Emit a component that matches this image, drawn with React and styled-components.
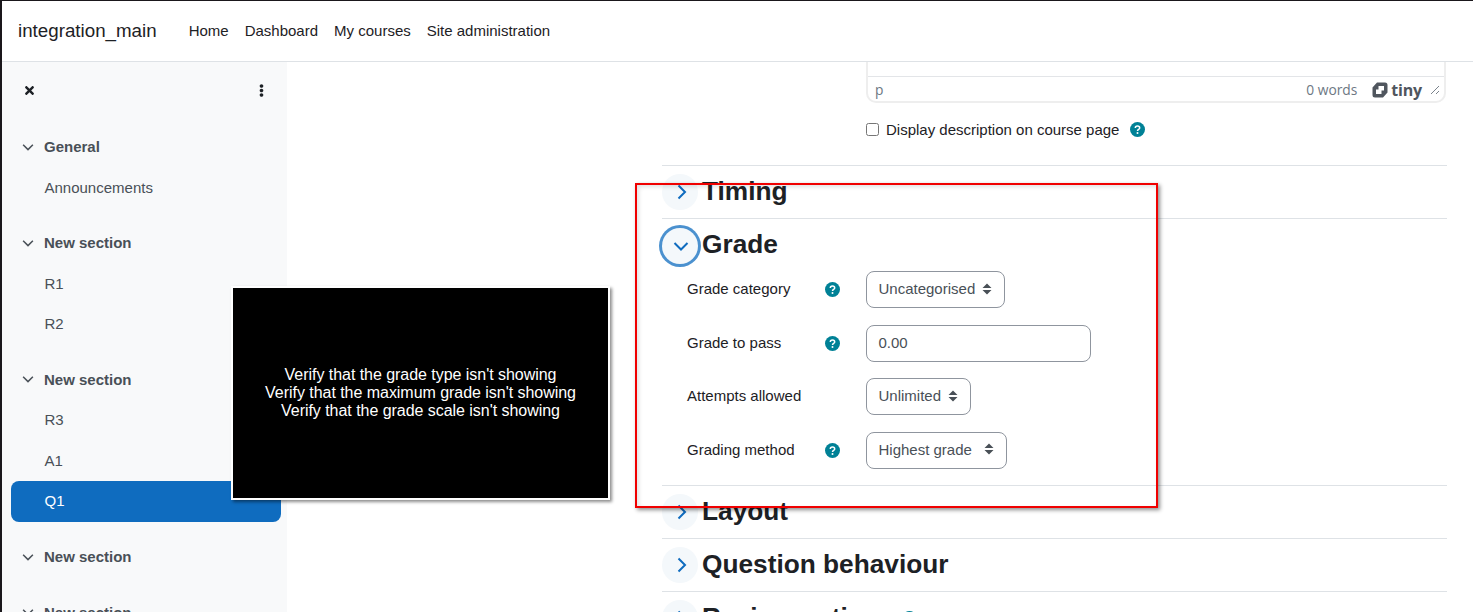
import React from "react";
import styled, { createGlobalStyle } from "styled-components";
import { FaTimes, FaEllipsisV } from "react-icons/fa";

const GlobalStyle = createGlobalStyle`
  html, body {
    margin: 0;
    padding: 0;
    background: #fff;
    overflow: hidden;
    font-family: "Liberation Sans", Arial, sans-serif;
    color: #1d2125;
  }
`;

// Page shell
const Page = styled.div`
  position: relative;
  box-sizing: border-box;
  height: 612px;
  width: 1473px;
  overflow: hidden;
  border-top: 1px solid #1a171b;
  border-left: 2px solid #1a171b;
  display: flex;
  flex-direction: column;
`;

const Navbar = styled.header`
  flex: none;
  height: 58px;
  box-sizing: content-box;
  padding: 0 0 2px 16px;
  border-bottom: 1px solid #dee2e6;
  display: flex;
  align-items: center;
`;

const Brand = styled.div`
  font-size: 18.75px;
  margin-right: 24px;
  padding-top: 2px;
`;

const NavLink = styled.a`
  font-size: 15px;
  padding: 0 8px;
`;

const Body = styled.div`
  flex: 1;
  display: flex;
  min-height: 0;
`;

// Course index drawer
const Drawer = styled.aside`
  flex: none;
  width: 285px;
  background: #f8f9fa;
  padding: 0 6px 0 9px;
  box-sizing: border-box;
  color: #495057;
`;

const DrawerTools = styled.div`
  height: 56px;
  margin-bottom: 8px;
  display: flex;
  align-items: center;
  justify-content: space-between;
  padding: 0 13px 0 12px;
  color: #1d2125;
  font-size: 13px;
`;

const Group = styled.section`
  margin-bottom: 14.5px;
`;

const GroupHead = styled.div`
  height: 41px;
  display: flex;
  align-items: center;
  gap: 10px;
  padding-left: 11px;
  font-size: 15px;
  font-weight: 700;
`;

const Item = styled.div`
  box-sizing: border-box;
  height: ${({ $active }) => ($active ? "41px" : "40.5px")};
  padding-bottom: ${({ $active }) => ($active ? "1px" : "0")};
  display: flex;
  align-items: center;
  padding-left: 33.5px;
  font-size: 15px;
  border-radius: 8px;
  background: ${({ $active }) => ($active ? "#0f6cbf" : "transparent")};
  color: ${({ $active }) => ($active ? "#fff" : "#495057")};
`;

// Main column
const Main = styled.main`
  flex: 1;
  padding-left: 375px;
  min-width: 0;
`;

const Column = styled.div`
  width: 785px;
`;

const DescriptionBlock = styled.div`
  padding-left: 204px;
  height: 103px;
`;

const EditorBox = styled.div`
  box-sizing: border-box;
  height: 41px;
  width: 580px;
  padding-top: 14px;
  border: 2px solid #eeeeee;
  border-top: 0;
  border-radius: 0 0 10px 10px;
`;

const StatusBar = styled.div`
  height: 25px;
  border-top: 1px solid #e3e5e8;
  display: flex;
  align-items: center;
  padding: 0 4px 0 7px;
  font-family: "Open Sans", sans-serif;
  font-size: 13.8px;
  color: #6d7883;
`;

const WordCount = styled.span`
  margin-left: auto;
  margin-right: 15px;
`;

const TinyLogo = styled.span`
  display: flex;
  align-items: center;
  gap: 3px;
  font-size: 16px;
  font-weight: 700;
  color: #50565e;
  margin-right: 8px;
  letter-spacing: -0.2px;
`;

const CheckRow = styled.label`
  display: flex;
  align-items: center;
  height: 20px;
  margin-top: 16px;
  font-size: 15px;
`;

const Check = styled.input`
  margin: 0 7px 0 0;
  width: 13px;
  height: 13px;
`;

const HelpBadge = styled.svg`
  width: 15px;
  height: 15px;
  flex: none;
  display: block;
  margin-left: ${({ $gap }) => $gap || 0}px;
`;

const Section = styled.section`
  border-top: 1px solid #dee2e6;
`;

const SectionHead = styled.div`
  height: 52px;
  display: flex;
  align-items: center;
  gap: 4px;
`;

const Toggle = styled.span`
  flex: none;
  box-sizing: border-box;
  width: 36px;
  height: 36px;
  padding-left: ${({ $focused }) => ($focused ? 2 : 3)}px;
  border-radius: 50%;
  background: #f4f8fb;
  display: flex;
  align-items: center;
  justify-content: center;
  color: #0f6cbf;
  ${({ $focused }) =>
    $focused &&
    `
    margin-top: 1px;
    box-shadow: 0 0 0 3px rgba(15, 108, 191, 0.75);
  `}
`;

const Title = styled.h3`
  margin: 0;
  font-size: 26.25px;
  font-weight: 700;
  color: #1d2125;
  line-height: 1.2;
`;

const Form = styled.div`
  padding: 0 0 16.5px 25px;
  display: grid;
  row-gap: 16.5px;
`;

const FormRow = styled.div`
  display: grid;
  grid-template-columns: 138px 41px auto;
  align-items: center;
  height: 37px;
  font-size: 15px;
`;

const FieldLabel = styled.span`
  padding-bottom: 2px;
`;

const Select = styled.div`
  box-sizing: border-box;
  height: 37px;
  width: ${({ $width }) => $width}px;
  border: 1px solid #8f959e;
  border-radius: 8px;
  display: flex;
  align-items: center;
  justify-content: space-between;
  padding: 0 12px 2px 11.5px;
  color: #495057;
`;

const TextInput = styled.div`
  box-sizing: border-box;
  height: 37px;
  width: 225px;
  border: 1px solid #8f959e;
  border-radius: 8px;
  display: flex;
  align-items: center;
  padding: 0 11.5px 2px;
  color: #495057;
`;

// Annotations laid over the screenshot
const RedFrame = styled.div`
  position: absolute;
  left: 633px;
  top: 182px;
  width: 523px;
  height: 325px;
  box-sizing: border-box;
  border: 2px solid #f00000;
  box-shadow: 2px 2px 4px rgba(0, 0, 0, 0.45), inset 2px 2px 4px rgba(0, 0, 0, 0.12);
  pointer-events: none;
`;

const Callout = styled.div`
  position: absolute;
  left: 229px;
  top: 285px;
  width: 379px;
  height: 214px;
  box-sizing: border-box;
  background: #000;
  border: 2px solid #fff;
  box-shadow: 2px 2px 3px rgba(0, 0, 0, 0.45);
  color: #fff;
  font-size: 16px;
  line-height: 18px;
  letter-spacing: -0.04px;
  display: flex;
  flex-direction: column;
  align-items: center;
  justify-content: center;
`;

const Chevron = ({ down, size = 16, weight = 2 }) => (
  <svg width={size} height={size} viewBox="0 0 16 16" fill="none" stroke="currentColor" strokeWidth={weight}>
    <path d={down ? "M1.5 5 8 11.5 14.5 5" : "M4.5 1.5 11 8l-6.500 6.500"} />
  </svg>
);

const Caret = () => (
  <svg width="10" height="12" viewBox="0 0 10 12" fill="#495057">
    <path d="M5 0.500 9.500 5H0.500zM5 11.500 0.500 7h9z" />
  </svg>
);

const Help = ({ gap }) => (
  <HelpBadge viewBox="0 0 15 15" $gap={gap}>
    <circle cx="7.500" cy="7.500" r="7.500" fill="#008196" />
    <path d="M5.300 6c0-1.300 1-2 2.200-2s2.200.7 2.200 1.900c0 1.500-2.200 1.500-2.200 3" fill="none" stroke="#fff" strokeWidth="1.500" />
    <circle cx="7.500" cy="11" r="1" fill="#fff" />
  </HelpBadge>
);

const TinyMark = () => (
  <svg width="16" height="16" viewBox="0 0 16 16">
    <path
      fill="#50565e"
      fillRule="evenodd"
      d="M5 .5h8A2.500 2.500 0 0 1 15.500 3v7.500L11 15.500H3A2.500 2.500 0 0 1 .5 13V5.500zM6.500 4v3.500H4V12h5.500V8.500H12V4z"
    />
  </svg>
);

const ResizeGrip = () => (
  <svg width="10" height="10" viewBox="0 0 10 10" stroke="#7a828b" strokeWidth="1">
    <path d="M1 9 9 1M6 9l3-3" />
  </svg>
);

const courseIndex = [
  { title: "General", items: ["Announcements"] },
  { title: "New section", items: ["R1", "R2"] },
  { title: "New section", items: ["R3", "A1", "Q1"] },
  { title: "New section", items: [] },
  { title: "New section", items: [] },
];

const gradeFields = [
  { label: "Grade category", help: true, value: "Uncategorised", width: 139 },
  { label: "Grade to pass", help: true, value: "0.00", input: true },
  { label: "Attempts allowed", help: false, value: "Unlimited", width: 105 },
  { label: "Grading method", help: true, value: "Highest grade", width: 141 },
];

const GradeForm = () => (
  <Form>
    {gradeFields.map((field) => (
      <FormRow key={field.label}>
        <FieldLabel>{field.label}</FieldLabel>
        <span>{field.help && <Help />}</span>
        {field.input ? (
          <TextInput>{field.value}</TextInput>
        ) : (
          <Select $width={field.width}>
            {field.value}
            <Caret />
          </Select>
        )}
      </FormRow>
    ))}
  </Form>
);

export default function App() {
  return (
    <Page>
      <GlobalStyle />
      <Navbar>
        <Brand>integration_main</Brand>
        <NavLink>Home</NavLink>
        <NavLink>Dashboard</NavLink>
        <NavLink>My courses</NavLink>
        <NavLink>Site administration</NavLink>
      </Navbar>
      <Body>
        <Drawer>
          <DrawerTools>
            <FaTimes />
            <FaEllipsisV />
          </DrawerTools>
          {courseIndex.map((group, i) => (
            <Group key={i}>
              <GroupHead>
                <Chevron down size={12} weight={2} />
                {group.title}
              </GroupHead>
              {group.items.map((item) => (
                <Item key={item} $active={item === "Q1"}>
                  {item}
                </Item>
              ))}
            </Group>
          ))}
        </Drawer>
        <Main>
          <Column>
            <DescriptionBlock>
              <EditorBox>
                <StatusBar>
                  p
                  <WordCount>0 words</WordCount>
                  <TinyLogo>
                    <TinyMark />
                    tiny
                  </TinyLogo>
                  <ResizeGrip />
                </StatusBar>
              </EditorBox>
              <CheckRow>
                <Check type="checkbox" />
                Display description on course page
                <Help gap={11} />
              </CheckRow>
            </DescriptionBlock>
            <Section>
              <SectionHead>
                <Toggle><Chevron /></Toggle>
                <Title>Timing</Title>
              </SectionHead>
            </Section>
            <Section>
              <SectionHead>
                <Toggle $focused><Chevron down /></Toggle>
                <Title>Grade</Title>
              </SectionHead>
              <GradeForm />
            </Section>
            <Section>
              <SectionHead>
                <Toggle><Chevron /></Toggle>
                <Title>Layout</Title>
              </SectionHead>
            </Section>
            <Section>
              <SectionHead>
                <Toggle><Chevron /></Toggle>
                <Title>Question behaviour</Title>
              </SectionHead>
            </Section>
            <Section>
              <SectionHead>
                <Toggle><Chevron /></Toggle>
                <Title>Review options</Title>
                <Help gap={3} />
              </SectionHead>
            </Section>
          </Column>
        </Main>
      </Body>
      <RedFrame />
      <Callout>
        <div>Verify that the grade type isn't showing</div>
        <div>Verify that the maximum grade isn't showing</div>
        <div>Verify that the grade scale isn't showing</div>
      </Callout>
    </Page>
  );
}
